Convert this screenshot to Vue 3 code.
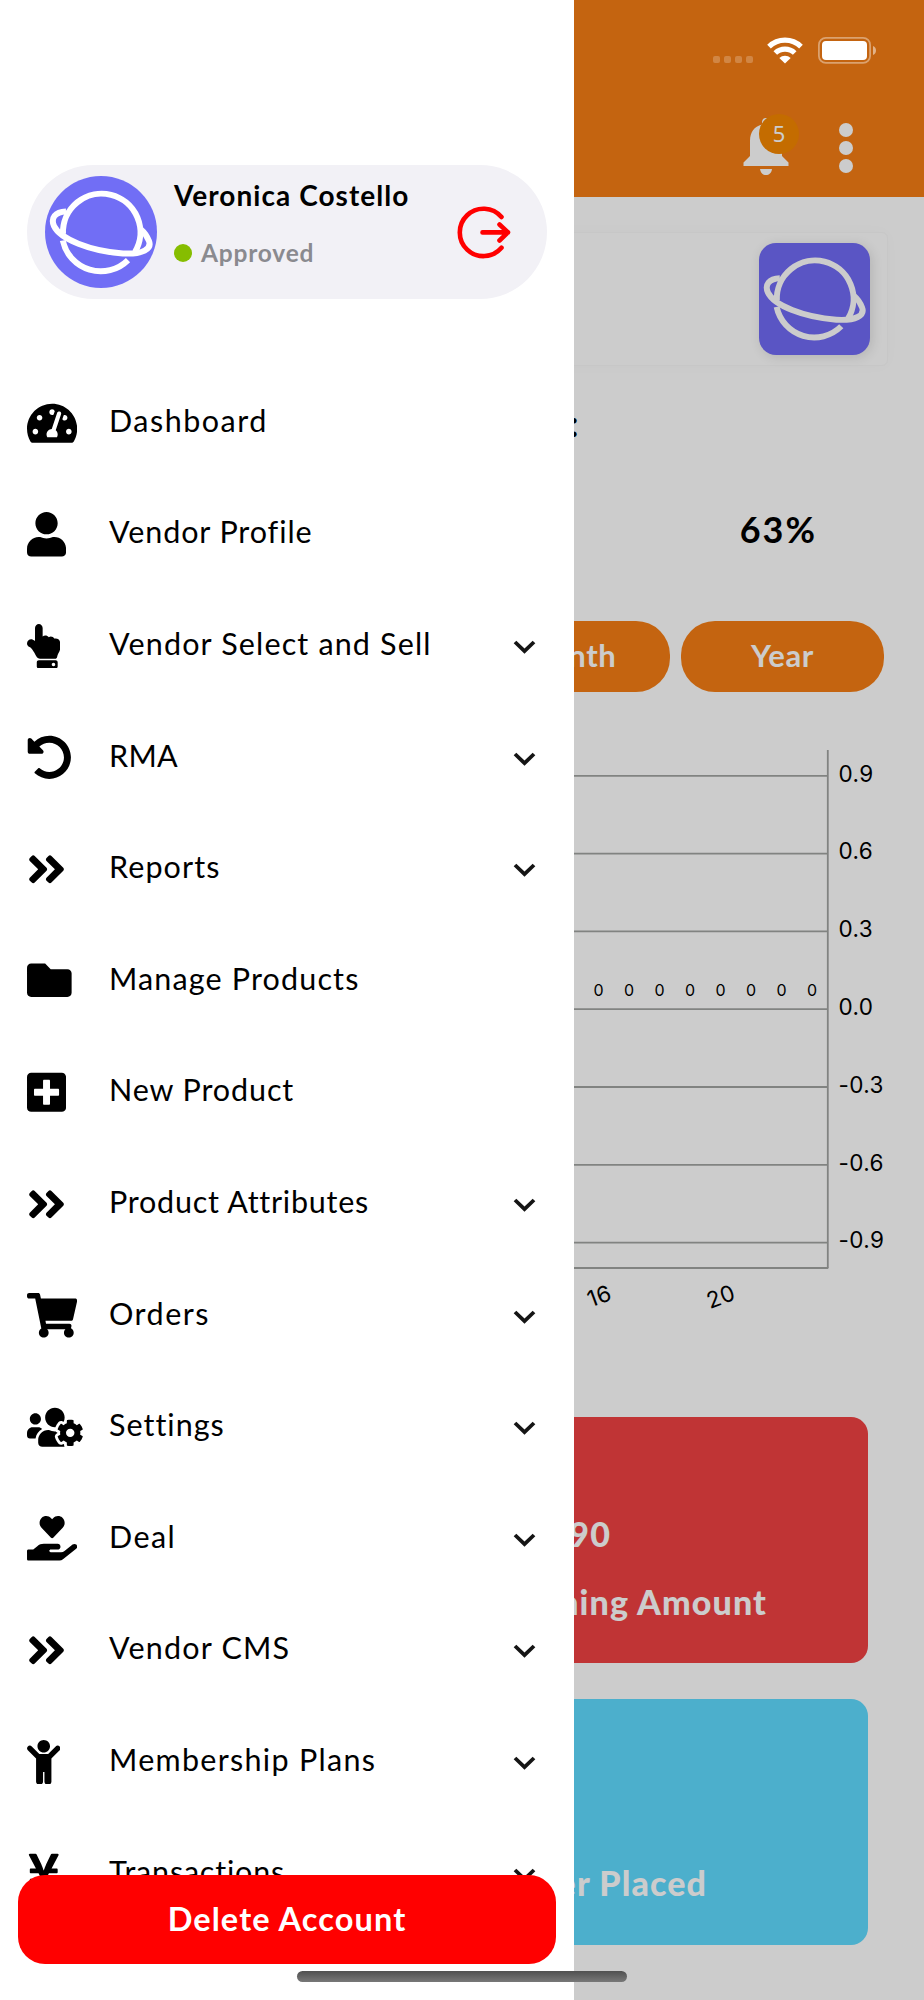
<script setup>
import { computed, ref } from 'vue'

const icons = {
  gauge: {
    w: 576,
    d: 'M288 32C128.94 32 0 160.94 0 320c0 52.8 14.25 102.26 39.06 144.8 5.61 9.62 16.3 15.2 27.44 15.2h443c11.14 0 21.83-5.58 27.44-15.2C561.75 422.26 576 372.8 576 320c0-159.06-128.94-288-288-288zm0 64c14.71 0 26.58 10.13 30.32 23.65-1.11 2.26-2.64 4.23-3.45 6.67l-9.22 27.67c-5.13 3.49-10.97 6.01-17.64 6.01-17.67 0-32-14.33-32-32S270.33 96 288 96zM96 384c-17.67 0-32-14.33-32-32s14.33-32 32-32 32 14.33 32 32-14.33 32-32 32zm48-160c-17.67 0-32-14.33-32-32s14.33-32 32-32 32 14.33 32 32-14.33 32-32 32zm246.77-72.41l-61.33 184C343.13 347.33 352 364.54 352 384c0 11.72-3.38 22.55-8.88 32H232.88c-5.5-9.45-8.88-20.28-8.88-32 0-33.94 26.5-61.43 59.9-63.59l61.34-184.01c4.17-12.56 17.73-19.45 30.36-15.17 12.57 4.19 19.35 17.79 15.17 30.36zm14.66 57.2l15.52-46.55c3.47-1.29 7.13-2.23 11.05-2.23 17.67 0 32 14.33 32 32s-14.33 32-32 32c-11.38-.01-20.89-6.28-26.57-15.22zM480 384c-17.67 0-32-14.33-32-32s14.33-32 32-32 32 14.33 32 32-14.33 32-32 32z',
  },
  user: {
    w: 448,
    d: 'M224 256c70.7 0 128-57.3 128-128S294.7 0 224 0 96 57.3 96 128s57.3 128 128 128zm89.6 32h-16.7c-22.2 10.2-46.9 16-72.9 16s-50.6-5.8-72.9-16h-16.7C60.2 288 0 348.2 0 422.4V464c0 26.5 21.5 48 48 48h352c26.5 0 48-21.5 48-48v-41.6c0-74.2-60.2-134.4-134.4-134.4z',
  },
  pointer: {
    w: 384,
    d: 'M135.652 0c23.625 0 43.826 20.65 43.826 44.8v99.851c17.048-16.34 49.766-18.346 70.944 6.299 22.829-14.288 53.017-2.147 62.315 16.45C361.878 158.426 384 189.346 384 240c0 2.746-.203 13.276-.195 16 .168 61.971-31.065 76.894-38.315 123.731C343.683 391.404 333.599 400 321.786 400H150.261l-.001-.002c-18.366-.011-35.889-10.607-43.845-28.464C93.421 342.648 57.377 276.122 29.092 264 10.897 256.203.008 242.616 0 224c-.014-34.222 35.098-57.752 66.908-44.119 8.359 3.583 16.67 8.312 24.918 14.153V44.8c0-23.45 20.543-44.8 43.826-44.8zM136 416h192c13.255 0 24 10.745 24 24v48c0 13.255-10.745 24-24 24H136c-13.255 0-24-10.745-24-24v-48c0-13.255 10.745-24 24-24zm168 28c-11.046 0-20 8.954-20 20s8.954 20 20 20 20-8.954 20-20-8.954-20-20-20z',
  },
  undo: {
    w: 512,
    d: 'M255.545 8c-66.269.119-126.438 26.233-170.86 68.685L48.971 40.971C33.851 25.851 8 36.559 8 57.941V192c0 13.255 10.745 24 24 24h134.059c21.382 0 32.09-25.851 16.971-40.971l-41.75-41.75c30.864-28.899 70.801-44.907 113.23-45.273 92.398-.798 170.283 73.977 169.484 169.442C423.236 348.009 349.816 424 256 424c-41.127 0-79.997-14.678-110.63-41.556-4.743-4.161-11.906-3.908-16.368.553L89.34 422.659c-4.872 4.872-4.631 12.815.482 17.433C133.798 479.813 192.074 504 256 504c136.966 0 247.999-111.033 248-247.998C504.001 119.193 392.354 7.755 255.545 8z',
  },
  angles: {
    w: 448,
    d: 'M224.3 273l-136 136c-9.4 9.4-24.6 9.4-33.9 0l-22.6-22.6c-9.4-9.4-9.4-24.6 0-33.9l96.4-96.4-96.4-96.4c-9.4-9.4-9.4-24.6 0-33.9L54.3 103c9.4-9.4 24.6-9.4 33.9 0l136 136c9.5 9.4 9.5 24.6.1 34zm192-34l-136-136c-9.4-9.4-24.6-9.4-33.9 0l-22.6 22.6c-9.4 9.4-9.4 24.6 0 33.9l96.4 96.4-96.4 96.4c-9.4 9.4-9.4 24.6 0 33.9l22.6 22.6c9.4 9.4 24.6 9.4 33.9 0l136-136c9.4-9.2 9.4-24.4 0-33.8z',
  },
  folder: {
    w: 512,
    d: 'M464 128H272l-64-64H48C21.49 64 0 85.49 0 112v288c0 26.51 21.49 48 48 48h416c26.51 0 48-21.49 48-48V176c0-26.51-21.49-48-48-48z',
  },
  plus: {
    w: 448,
    d: 'M400 32H48C21.5 32 0 53.5 0 80v352c0 26.5 21.5 48 48 48h352c26.5 0 48-21.5 48-48V80c0-26.5-21.5-48-48-48zm-32 252c0 6.6-5.4 12-12 12h-92v92c0 6.6-5.4 12-12 12h-56c-6.6 0-12-5.4-12-12v-92H92c-6.6 0-12-5.4-12-12v-56c0-6.6 5.4-12 12-12h92v-92c0-6.6 5.4-12 12-12h56c6.6 0 12 5.4 12 12v92h92c6.6 0 12 5.4 12 12v56z',
  },
  cart: {
    w: 576,
    d: 'M528.12 301.319l47.273-208C578.806 78.301 567.391 64 551.99 64H159.208l-9.166-44.81C147.758 8.021 137.93 0 126.529 0H24C10.745 0 0 10.745 0 24v16c0 13.255 10.745 24 24 24h69.883l70.248 343.435C147.325 417.1 136 435.222 136 456c0 30.928 25.072 56 56 56s56-25.072 56-56c0-15.674-6.447-29.835-16.824-40h209.647C430.447 426.165 424 440.326 424 456c0 30.928 25.072 56 56 56s56-25.072 56-56c0-22.172-12.888-41.332-31.579-50.405l5.517-24.276c3.413-15.018-8.002-29.319-23.403-29.319H218.117l-6.545-32h293.145c11.206 0 20.92-7.754 23.403-18.681z',
  },
  usersCog: {
    w: 640,
    d: 'M610.5 341.3c2.6-14.1 2.6-28.5 0-42.6l25.8-14.9c3-1.7 4.3-5.2 3.3-8.5-6.7-21.6-18.2-41.2-33.2-57.4-2.3-2.5-6-3.1-9-1.4l-25.8 14.9c-10.9-9.3-23.4-16.5-36.9-21.3v-29.8c0-3.4-2.4-6.4-5.7-7.1-22.3-5-45-4.8-66.2 0-3.3.7-5.7 3.7-5.7 7.1v29.8c-13.5 4.8-26 12-36.9 21.3l-25.8-14.9c-2.9-1.7-6.7-1.1-9 1.4-15 16.2-26.5 35.8-33.2 57.4-1 3.3.4 6.8 3.3 8.5l25.8 14.9c-2.6 14.1-2.6 28.5 0 42.6l-25.8 14.9c-3 1.7-4.3 5.2-3.3 8.5 6.7 21.6 18.2 41.1 33.2 57.4 2.3 2.5 6 3.1 9 1.4l25.8-14.9c10.9 9.3 23.4 16.5 36.9 21.3v29.8c0 3.4 2.4 6.4 5.7 7.1 22.3 5 45 4.8 66.2 0 3.3-.7 5.7-3.7 5.7-7.1v-29.8c13.5-4.8 26-12 36.9-21.3l25.8 14.9c2.9 1.7 6.7 1.1 9-1.4 15-16.2 26.5-35.8 33.2-57.4 1-3.3-.4-6.8-3.3-8.5l-25.8-14.9zM496 368.5c-26.8 0-48.5-21.8-48.5-48.5s21.8-48.5 48.5-48.5 48.5 21.8 48.5 48.5-21.7 48.5-48.5 48.5zM96 224c35.3 0 64-28.7 64-64s-28.7-64-64-64-64 28.7-64 64 28.7 64 64 64zm224 32c1.9 0 3.7-.5 5.6-.6 8.3-21.7 20.5-42.1 36.3-59.2 7.4-8 17.9-12.6 28.9-12.6 6.9 0 13.7 1.8 19.6 5.3l7.9 4.6c.8-.5 1.6-.9 2.4-1.4 7-14.6 11.2-30.8 11.2-48 0-61.9-50.1-112-112-112S208 82.1 208 144c0 61.9 50.1 112 112 112zm105.2 194.5c-2.3-1.2-4.6-2.6-6.8-3.9-8.2 4.8-15.3 9.8-27.5 9.8-10.9 0-21.4-4.6-28.9-12.6-18.3-19.8-32.3-43.9-40.2-69.6-10.7-34.5 24.9-49.7 25.8-50.3-.1-2.6-.1-5.2 0-7.8l-7.9-4.6c-3.8-2.2-7-5-9.8-8.1-3.3.2-6.5.6-9.8.6-24.6 0-47.6-6-68.5-16h-8.3C179.6 288 128 339.6 128 403.2V432c0 26.5 21.5 48 48 48h255.4c-3.7-6-6.2-12.8-6.2-20.3v-9.2zM173.1 274.6C161.5 263.1 145.6 256 128 256H64c-35.3 0-64 28.7-64 64v32c0 17.7 14.3 32 32 32h65.9c6.3-47.4 34.9-87.3 75.2-109.4z',
  },
  handHeart: {
    w: 576,
    d: 'M275.3 250.5c7 7.4 18.4 7.4 25.5 0l108.9-114.2c31.6-33.2 29.8-88.2-5.6-118.8-30.8-26.7-76.7-21.9-104.9 7.7L288 36.9l-11.1-11.6C248.7-4.4 202.8-9.2 172 17.5c-35.3 30.6-37.2 85.6-5.6 118.8l108.9 114.2zm290 77.6c-11.8-10.7-30.2-10-42.6 0L430.3 402c-11.3 9.1-25.4 14-40 14H272c-8.8 0-16-7.2-16-16s7.2-16 16-16h78.3c15.9 0 30.7-10.9 33.3-26.6 3.3-20-12.1-37.4-31.6-37.4H192c-27 0-53.1 9.3-74.1 26.3L71.4 384H16c-8.8 0-16 7.2-16 16v96c0 8.8 7.2 16 16 16h356.8c14.5 0 28.6-4.9 40-14L564 377c15.2-12.1 16.4-35.3 1.3-48.9z',
  },
  child: {
    w: 384,
    d: 'M120 72c0-39.765 32.235-72 72-72s72 32.235 72 72c0 39.764-32.235 72-72 72s-72-32.236-72-72zm254.627 1.373c-12.496-12.497-32.758-12.497-45.254 0L242.745 160H141.254L54.627 73.373c-12.496-12.497-32.758-12.497-45.254 0-12.497 12.497-12.497 32.758 0 45.255L104 213.254V480c0 17.673 14.327 32 32 32h16c17.673 0 32-14.327 32-32V368h16v112c0 17.673 14.327 32 32 32h16c17.673 0 32-14.327 32-32V213.254l94.627-94.626c12.497-12.497 12.497-32.757 0-45.255z',
  },
  yen: {
    w: 384,
    d: 'M351.2 32h-65.3c-4.6 0-8.8 2.6-10.8 6.7l-55.4 113.2c-14.5 34.7-27.1 71.9-27.1 71.9h-1.3s-12.6-37.2-27.1-71.9L108.8 38.7c-2-4.1-6.2-6.7-10.8-6.7H32.8c-9.1 0-14.8 9.7-10.6 17.6L102.3 200H44c-6.6 0-12 5.4-12 12v32c0 6.6 5.4 12 12 12h88.2l19.8 37.2V320H44c-6.6 0-12 5.4-12 12v32c0 6.6 5.4 12 12 12h108v92c0 6.6 5.4 12 12 12h56c6.6 0 12-5.4 12-12v-92h108c6.6 0 12-5.4 12-12v-32c0-6.6-5.4-12-12-12H232v-26.8l19.8-37.2H340c6.6 0 12-5.4 12-12v-32c0-6.6-5.4-12-12-12h-58.3l80.1-150.4c4.2-7.9-1.5-17.6-10.6-17.6z',
  },
}

// tracking is the letter spacing of the label, in px
const menu = ref([
  { label: 'Dashboard', icon: 'gauge', tracking: 1.5 },
  { label: 'Vendor Profile', icon: 'user', tracking: 0.9 },
  { label: 'Vendor Select and Sell', icon: 'pointer', tracking: 1.15, children: true },
  { label: 'RMA', icon: 'undo', tracking: 0.3, children: true },
  { label: 'Reports', icon: 'angles', tracking: 1.1, children: true },
  { label: 'Manage Products', icon: 'folder', tracking: 1.15 },
  { label: 'New Product', icon: 'plus', tracking: 0.9 },
  { label: 'Product Attributes', icon: 'angles', tracking: 0.75, children: true },
  { label: 'Orders', icon: 'cart', tracking: 1.5, children: true },
  { label: 'Settings', icon: 'usersCog', tracking: 1, children: true },
  { label: 'Deal', icon: 'handHeart', tracking: 1.4, children: true },
  { label: 'Vendor CMS', icon: 'angles', tracking: 1.2, children: true },
  { label: 'Membership Plans', icon: 'child', tracking: 1.3, children: true },
  { label: 'Transactions', icon: 'yen', tracking: 0.8, children: true },
])

const planet = [
  'M18 58A38.7 38.7 0 1 1 90 76',
  'M17.8 64.5A38.7 38.7 0 0 0 83 84',
  'M21 35.6C10 36 5.5 42 9 50C15 63 45 75 78 77.4C98 78.6 107 73 104 65C102 60 99 56 96 53.5',
]

const ticks = computed(() =>
  ['0.9', '0.6', '0.3', '0.0', '-0.3', '-0.6', '-0.9'].map((label, i) => ({
    label,
    y: 25.8 + i * 77.8,
  })),
)

const points = Array.from({ length: 8 }, (_, i) => 812 - i * 30.5)
</script>

<template>
  <div class="screen">
    <div class="page">
      <header class="topbar">
        <div class="bell">
          <svg viewBox="0 0 46 60" width="46" height="60">
            <path d="M23 1c2.500 0 4 1.600 4 4v2.500c8 2 12 8 12 16V39l6.500 6.500V49H.5v-3.500L7 39V23.500c0-8 4-14 12-16V5c0-2.400 1.500-4 4-4zM17 52h12c-.5 4-3 6-6 6s-5.500-2-6-6z" fill="#fff" />
          </svg>
          <span class="badge">5</span>
        </div>
        <div class="dots"><i /><i /><i /></div>
      </header>

      <section class="vendor-card">
        <div class="vendor-logo">
          <svg viewBox="0 0 112 112" fill="none" stroke="#fff" stroke-width="6">
            <path v-for="d in planet" :key="d" :d="d" />
          </svg>
        </div>
      </section>

      <div class="caption">:</div>
      <div class="percent">63%</div>

      <div class="tabs">
        <button type="button">Month</button>
        <button type="button">Year</button>
      </div>

      <svg class="chart" width="924" height="600" viewBox="0 0 924 600">
        <g stroke="#a2a4a2" stroke-width="1.8">
          <line v-for="t in ticks" :key="t.label" x1="40" x2="827.5" :y1="t.y" :y2="t.y" />
          <line x1="40" x2="828.300" y1="518" y2="518" />
          <line x1="827.800" x2="827.800" y1="0" y2="518" />
        </g>
        <text v-for="t in ticks" :key="t.label" x="838.500" :y="t.y + 5.700" class="tick">{{ t.label }}</text>
        <text v-for="x in points" :key="x" :x="x" y="246" class="point">0</text>
        <text class="tick mid" transform="translate(602 553.500) rotate(-20)">16</text>
        <text class="tick mid" transform="translate(723.500 554) rotate(-20)">20</text>
      </svg>

      <div class="stat red">
        <span>$90</span>
        <span class="stat-label">Remaining Amount</span>
      </div>
      <div class="stat blue">
        <span class="stat-label">Order Placed</span>
      </div>
    </div>

    <div class="scrim" />

    <div class="status">
      <div class="signal"><i /><i /><i /><i /></div>
      <svg width="36" height="27" viewBox="0 0 36 27">
        <g fill="none" stroke="#fff" stroke-width="5.200">
          <path d="M2 9.600A23 23 0 0 1 34 9.600" />
          <path d="M8.300 16A14 14 0 0 1 27.700 16" />
        </g>
        <path d="M12.300 21a8.500 8.500 0 0 1 11.400 0L18 26.600z" fill="#fff" />
      </svg>
      <svg class="battery" width="59" height="27" viewBox="0 0 59 27">
        <rect x=".9" y=".9" width="51.200" height="25" rx="7" fill="none" stroke="#fff" stroke-opacity=".4" stroke-width="1.800" />
        <rect x="4" y="4" width="45" height="19" rx="4" fill="#fff" />
        <path d="M55 9c4 1.500 4 7.500 0 9z" fill="#fff" fill-opacity=".5" />
      </svg>
    </div>

    <aside class="drawer">
      <div class="profile">
        <div class="avatar">
          <svg viewBox="0 0 112 112" fill="none" stroke="#fff" stroke-width="6">
            <path v-for="d in planet" :key="d" :d="d" />
          </svg>
        </div>
        <div class="who">
          <div class="name">Veronica Costello</div>
          <div class="state"><i />Approved</div>
        </div>
        <svg class="logout" width="56" height="56" viewBox="0 0 56 56" fill="none" stroke="#f00" stroke-width="4.600" stroke-linecap="round" stroke-linejoin="round">
          <path d="M46.500 13A23.700 23.700 0 1 0 46.500 43.800M27.500 28.400H53M44.500 20.500L53 28.400L44.500 36.500" />
        </svg>
      </div>

      <nav class="menu">
        <a v-for="item in menu" :key="item.label" class="item">
          <span class="icon">
            <svg :viewBox="`0 0 ${icons[item.icon].w} 512`" :width="icons[item.icon].w * 0.0872" height="44.600">
              <path :d="icons[item.icon].d" />
            </svg>
          </span>
          <span class="label" :style="{ letterSpacing: item.tracking + 'px' }">{{ item.label }}</span>
          <svg v-if="item.children" class="chevron" width="24" height="16" viewBox="0 0 24 16">
            <path d="M2 3L11.500 12.200L21 3" fill="none" stroke="#151515" stroke-width="3.800" />
          </svg>
        </a>
      </nav>

      <button class="delete" type="button">Delete Account</button>
    </aside>

    <div class="home-bar" />
  </div>
</template>

<style>
body {
  background: #ccc;
}
</style>

<style scoped>
.screen {
  position: relative;
  width: 924px;
  height: 2000px;
  overflow: hidden;
  font-family: Lato, "Open Sans", sans-serif;
  color: #000;
}

button {
  border: 0;
  font-family: inherit;
  cursor: pointer;
}

.page {
  display: flex;
  flex-direction: column;
  height: 2000px;
  background: #fff;
}

.topbar {
  display: flex;
  justify-content: flex-end;
  flex: none;
  box-sizing: border-box;
  height: 197px;
  padding: 117px 71.500px 0 0;
  background: #f57e14;
}

.bell {
  position: relative;
  width: 46px;
  height: 60px;
  margin-right: 49.500px;
}

.badge {
  position: absolute;
  left: 16px;
  top: -3px;
  width: 40px;
  height: 40px;
  border-radius: 50%;
  background: #f58700;
  color: #fff;
  font-family: "Noto Sans", sans-serif;
  font-size: 22px;
  line-height: 39px;
  text-align: center;
}

.dots {
  display: flex;
  flex-direction: column;
  gap: 4px;
  padding-top: 5.500px;
}

.dots i {
  width: 14px;
  height: 14px;
  border-radius: 50%;
  background: #fff;
}

.vendor-card {
  display: flex;
  justify-content: flex-end;
  flex: none;
  box-sizing: border-box;
  width: 852px;
  height: 134px;
  margin: 35px 0 0 36px;
  padding: 10px 17px;
  border: 1px solid #f9f9f9;
  border-radius: 6px;
  box-shadow: 0 0 16px rgba(0, 0, 0, 0.02);
}

.vendor-logo {
  width: 111px;
  height: 112px;
  border-radius: 17px;
  background: #716bf5;
  box-shadow: 2px 2px 12px rgba(0, 0, 0, 0.12);
}

.vendor-logo svg,
.avatar svg {
  display: block;
}

.caption {
  width: 578.500px;
  height: 40px;
  margin-top: 37px;
  font-size: 36px;
  font-weight: 700;
  line-height: 40px;
  text-align: right;
}

.percent {
  height: 44px;
  margin: 65px 107px 0 0;
  font-size: 36px;
  font-weight: 700;
  line-height: 43px;
  letter-spacing: 2px;
  text-align: right;
}

.tabs {
  display: flex;
  justify-content: flex-end;
  gap: 11px;
  margin: 69px 40px 0 0;
}

.tabs button {
  width: 203px;
  height: 71px;
  padding: 0 0 3px;
  border-radius: 34px;
  background: #f57e14;
  color: #fff;
  font-size: 31px;
  font-weight: 700;
  letter-spacing: 0.6px;
}

.chart {
  flex: none;
  display: block;
  margin-top: 58px;
}

.tick {
  font-family: Inter, sans-serif;
  font-size: 22.500px;
  letter-spacing: 0.4px;
}

.mid {
  text-anchor: middle;
}

.point {
  font-family: Inter, sans-serif;
  font-size: 16px;
  text-anchor: middle;
}

.stat {
  display: flex;
  flex-direction: column;
  flex: none;
  box-sizing: border-box;
  width: 812px;
  height: 246px;
  margin: 67px 0 0 56px;
  border-radius: 17px;
  color: #fff;
  font-size: 34px;
  font-weight: 900;
  line-height: 40px;
  letter-spacing: 1.1px;
  text-align: right;
}

.red {
  padding: 97px 101px 0 0;
  background: #f04243;
}

.red span:first-child {
  padding-right: 156px;
}

.red .stat-label {
  padding-top: 28px;
}

.blue {
  margin-top: 36px;
  padding: 164px 161px 0 0;
  background: #5fdbff;
}

.scrim {
  position: absolute;
  inset: 0;
  background: rgba(0, 0, 0, 0.2);
}

.status {
  position: absolute;
  top: 37px;
  right: 47px;
  display: flex;
}

.signal {
  display: flex;
  gap: 4px;
  margin: 19px 14.500px 0 0;
}

.signal i {
  width: 7px;
  height: 7px;
  border-radius: 2px;
  background: rgba(255, 255, 255, 0.22);
}

.battery {
  margin-left: 15px;
}

.drawer {
  position: absolute;
  left: 0;
  top: 0;
  display: flex;
  flex-direction: column;
  box-sizing: border-box;
  width: 573.5px;
  height: 2000px;
  padding-top: 165px;
  background: #fff;
}

.profile {
  display: flex;
  align-items: center;
  flex: none;
  box-sizing: border-box;
  width: 520px;
  height: 134px;
  margin-left: 27px;
  padding: 0 36px 0 18px;
  border-radius: 67px;
  background: #f2f1f6;
}

.avatar {
  width: 112px;
  height: 112px;
  border-radius: 50%;
  background: #716ef5;
}

.who {
  flex: 1;
  padding: 0 0 18px 17px;
}

.name {
  font-size: 28px;
  font-weight: 700;
  line-height: 34px;
  letter-spacing: 1.05px;
  white-space: nowrap;
}

.state {
  display: flex;
  align-items: center;
  margin-top: 26px;
  color: #8a8a8f;
  font-size: 24.500px;
  font-weight: 700;
  line-height: 30px;
  letter-spacing: 0.8px;
}

.state i {
  width: 18px;
  height: 18px;
  margin-right: 9px;
  border-radius: 50%;
  background: #86bd00;
}

.menu {
  flex: none;
  height: 1570px;
  margin-top: 68px;
}

.item {
  display: flex;
  align-items: center;
  box-sizing: border-box;
  height: 111.6px;
  padding: 0 37px 0 27px;
}

.icon {
  display: flex;
  width: 82px;
}

.label {
  flex: 1;
  padding-bottom: 6px;
  font-size: 30.500px;
  white-space: nowrap;
}

.chevron {
  margin-top: 2px;
}

.delete {
  position: absolute;
  left: 18px;
  top: 1875px;
  width: 538px;
  height: 89px;
  padding: 0 0 2px;
  border-radius: 27px;
  background: #f00;
  color: #fff;
  font-size: 32.500px;
  font-weight: 700;
  letter-spacing: 1.1px;
}

.home-bar {
  position: absolute;
  left: 297px;
  top: 1971px;
  width: 330px;
  height: 11px;
  border-radius: 6px;
  background: linear-gradient(#505050, #787878);
}
</style>
